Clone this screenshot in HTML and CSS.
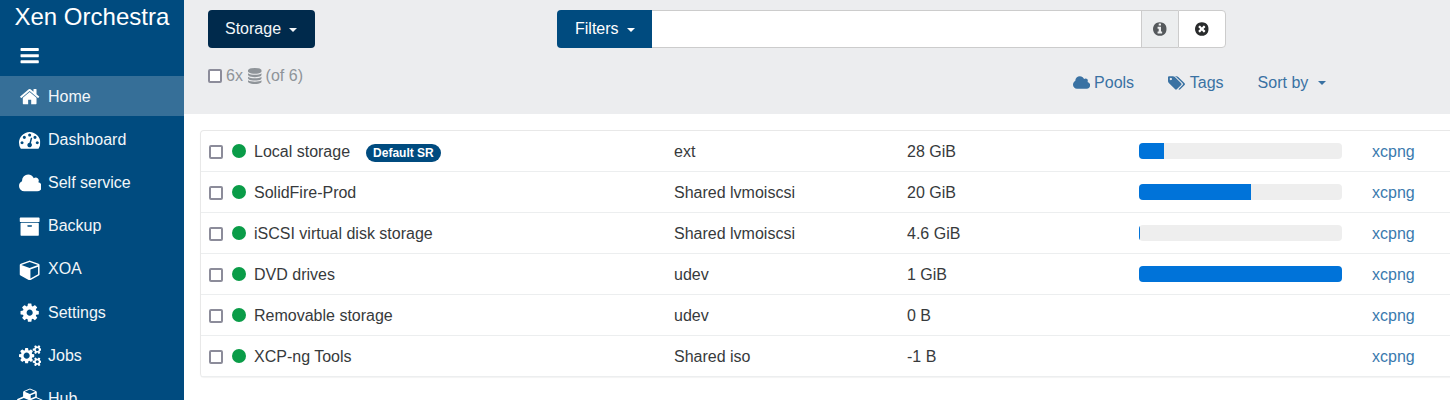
FILE: index.html
```html
<!DOCTYPE html>
<html lang="en">
<head>
    <meta charset="UTF-8">
    <title>Xen Orchestra</title>
    <link rel="stylesheet" href="styles.css">
</head>
<body>
    <svg class="sprite" xmlns="http://www.w3.org/2000/svg">
        <symbol id="i-bars" viewBox="0 0 1536 1792"><path d="M1536 1344v128q0 26-19 45t-45 19H64q-26 0-45-19t-19-45v-128q0-26 19-45t45-19h1408q26 0 45 19t19 45zm0-512v128q0 26-19 45t-45 19H64q-26 0-45-19T0 960V832q0-26 19-45t45-19h1408q26 0 45 19t19 45zm0-512v128q0 26-19 45t-45 19H64q-26 0-45-19T0 448V320q0-26 19-45t45-19h1408q26 0 45 19t19 45z"/></symbol>
        <symbol id="i-home" viewBox="0 0 1792 1792"><path d="M1472 992v480q0 26-19 45t-45 19h-384v-384H768v384H384q-26 0-45-19t-19-45V992q0-1 .5-3t.5-3l575-474 575 474q1 2 1 6zm223-69l-62 74q-8 9-21 11h-3q-13 0-21-7L896 424l-692 577q-12 8-24 7-13-2-21-11l-62-74q-8-10-7-23.500t11-21.500l719-599q32-26 76-26t76 26l244 204V288q0-14 9-23t23-9h192q14 0 23 9t9 23v408l219 182q10 8 11 21.500t-7 23.500z"/></symbol>
        <symbol id="i-dashboard" viewBox="0 0 1792 1792"><path d="M384 1152q0-53-37.500-90.500T256 1024t-90.500 37.500T128 1152t37.500 90.500T256 1280t90.500-37.500T384 1152zm192-448q0-53-37.500-90.500T448 576t-90.500 37.500T320 704t37.500 90.500T448 832t90.500-37.500T576 704zm428 481l101-382q6-26-7.500-48.500T1059 725t-48 6.500-30 39.500l-101 382q-60 5-107 43.500t-63 98.500q-20 77 20 146t117 89 146-20 89-117q16-60-6-117t-72-91zm660-33q0-53-37.500-90.500T1536 1024t-90.500 37.500T1408 1152t37.500 90.500 90.500 37.500 90.500-37.500 37.500-90.500zM1024 512q0-53-37.500-90.500T896 384t-90.500 37.500T768 512t37.500 90.500T896 640t90.500-37.500T1024 512zm448 192q0-53-37.500-90.500T1344 576t-90.500 37.500T1216 704t37.500 90.500T1344 832t90.500-37.500T1472 704zm320 448q0 261-141 483-19 29-54 29H195q-35 0-54-29Q0 1414 0 1152q0-182 71-348t191-286 286-191 348-71 348 71 286 191 191 286 71 348z"/></symbol>
        <symbol id="i-cloud" viewBox="0 0 1920 1792"><path d="M1856 1152q0 159-112.500 271.500T1472 1536H384q-185 0-316.500-131.500T-64 1088q0-132 71-241.500T194 683q-2-28-2-43 0-212 150-362t362-150q158 0 286.500 88T1178 446q70-62 166-62 106 0 181 75t75 181q0 75-41 138 129 30 213 134.500t84 239.500z" transform="translate(64)"/></symbol>
        <symbol id="i-archive" viewBox="0 0 1792 1792"><path d="M1088 832q0-26-19-45t-45-19H768q-26 0-45 19t-19 45 19 45 45 19h256q26 0 45-19t19-45zm576-192v960q0 26-19 45t-45 19H192q-26 0-45-19t-19-45V640q0-26 19-45t45-19h1408q26 0 45 19t19 45zm64-448v256q0 26-19 45t-45 19H128q-26 0-45-19t-19-45V192q0-26 19-45t45-19h1536q26 0 45 19t19 45z"/></symbol>
        <symbol id="i-cube" viewBox="0 0 1792 1792"><path d="M896 1629l640-349V644L896 877v752zm-64-864l698-254-698-254-698 254zm832-252v768q0 35-18 65t-49 47l-704 384q-28 16-61 16t-61-16l-704-384q-31-17-49-47t-18-65V513q0-40 23-73t61-47l704-256q22-8 44-8t44 8l704 256q38 14 61 47t23 73z" transform="translate(64)"/></symbol>
        <symbol id="i-cog" viewBox="0 0 1792 1792"><path d="M1152 896q0-106-75-181t-181-75-181 75-75 181 75 181 181 75 181-75 75-181zm512-109v222q0 12-8 23t-20 13l-185 28q-19 54-39 91 35 50 107 138 10 12 10 25t-9 23q-27 37-99 108t-94 71q-12 0-26-9l-138-108q-44 23-91 38-16 136-29 186-7 28-36 28H785q-14 0-24.500-8.500T749 1634l-28-184q-49-16-90-37l-141 107q-10 9-25 9-14 0-25-11-126-114-165-168-7-10-7-23 0-12 8-23 15-21 51-66.500t54-70.500q-27-50-41-99l-183-27q-13-2-21-12.500t-8-23.500V783q0-12 8-23t19-13l186-28q14-46 39-92-40-57-107-138-10-12-10-24 0-10 9-23 26-36 98.500-107.500T465 263q13 0 26 10l138 107q44-23 91-38 16-136 29-186 7-28 36-28h222q14 0 24.500 8.500T1043 158l28 184q49 16 90 37l142-107q9-9 24-9 13 0 25 10 129 119 165 170 7 8 7 22 0 12-8 23-15 21-51 66.500t-54 70.500q26 50 41 98l183 28q13 2 21 12.500t8 23.500z"/></symbol>
        <symbol id="i-cogs" viewBox="0 0 1920 1792"><path d="M896 896q0-106-75-181t-181-75-181 75-75 181 75 181 181 75 181-75 75-181zm768 512q0-52-38-90t-90-38-90 38-38 90q0 53 37.500 90.500t90.500 37.500 90.500-37.500 37.500-90.500zm0-1024q0-52-38-90t-90-38-90 38-38 90q0 53 37.500 90.500T1536 512t90.500-37.500T1664 384zm-384 421v185q0 10-7 19.500t-16 10.500l-155 24q-11 35-32 76 34 48 90 115 7 11 7 20 0 12-7 19-23 30-82.500 89.500T999 1423q-11 0-21-7l-115-90q-37 19-77 31-11 108-23 155-7 24-30 24H547q-11 0-20-7.500t-10-17.500l-23-153q-34-10-75-31l-118 89q-7 7-20 7-11 0-21-8-144-133-144-160 0-9 7-19 10-14 41-53t47-61q-23-44-35-82l-152-24q-10-1-17-9.500T0 987V802q0-10 7-19.500T23 772l155-24q11-35 32-76-34-48-90-115-7-11-7-20 0-12 7-20 22-30 82-89t79-59q11 0 21 7l115 90q34-18 77-32 11-108 23-154 7-24 30-24h186q11 0 20 7.500t10 17.500l23 153q34 10 75 31l118-89q8-7 20-7 11 0 21 8 144 133 144 160 0 8-7 19-12 16-42 54t-45 60q23 48 34 82l152 23q10 2 17 10.500t7 19.500zm640 533v140q0 16-149 31-12 27-30 52 51 113 51 138 0 4-4 7-122 71-124 71-8 0-46-47t-52-68q-20 2-30 2t-30-2q-14 21-52 68t-46 47q-2 0-124-71-4-3-4-7 0-25 51-138-18-25-30-52-149-15-149-31v-140q0-16 149-31 13-29 30-52-51-113-51-138 0-4 4-7 4-2 35-20t59-34 30-16q8 0 46 46.500t52 67.500q20-2 30-2t30 2q51-71 92-112l6-2q4 0 124 70 4 3 4 7 0 25-51 138 17 23 30 52 149 15 149 31zm0-1024v140q0 16-149 31-12 27-30 52 51 113 51 138 0 4-4 7-122 71-124 71-8 0-46-47t-52-68q-20 2-30 2t-30-2q-14 21-52 68t-46 47q-2 0-124-71-4-3-4-7 0-25 51-138-18-25-30-52-149-15-149-31V314q0-16 149-31 13-29 30-52-51-113-51-138 0-4 4-7 4-2 35-20t59-34 30-16q8 0 46 46.500t52 67.500q20-2 30-2t30 2q51-71 92-112l6-2q4 0 124 70 4 3 4 7 0 25-51 138 17 23 30 52 149 15 149 31z"/></symbol>
        <symbol id="i-cubes" viewBox="0 0 2176 1792"><path d="M640 1632l384-192v-314l-384 164v342zm-64-454l404-173-404-173-404 173zm1088 454l384-192v-314l-384 164v342zm-64-454l404-173-404-173-404 173zm-448-293l384-165V455L1152 619v266zm-64-379l441-189-441-189-441 189zm1088 518v416q0 36-19 67t-52 47l-448 224q-25 14-57 14t-57-14l-448-224q-4-2-7-4-2 2-7 4l-448 224q-25 14-57 14t-57-14l-448-224q-33-16-52-47t-19-67v-416q0-38 21.500-70t56.500-48l434-186V371q0-38 21.500-70t56.500-48l448-192q23-10 50-10t50 10l448 192q35 16 56.500 48t21.500 70v400l434 186q36 16 57 48t21 70z"/></symbol>
        <symbol id="i-database" viewBox="0 0 1536 1792"><path d="M768 768q237 0 443-43t325-127v170q0 69-103 128t-280 93.500-385 34.500-385-34.500T103 896 0 768V598q119 84 325 127t443 43zm0 768q237 0 443-43t325-127v170q0 69-103 128t-280 93.500-385 34.500-385-34.500-280-93.500-103-128v-170q119 84 325 127t443 43zm0-384q237 0 443-43t325-127v170q0 69-103 128t-280 93.500-385 34.500-385-34.500-280-93.500-103-128V982q119 84 325 127t443 43zM768 0q208 0 385 34.500t280 93.500 103 128v128q0 69-103 128t-280 93.500T768 640t-385-34.500T103 512 0 384V256q0-69 103-128t280-93.500T768 0z"/></symbol>
        <symbol id="i-tags" viewBox="0 0 1984 1792"><path d="M448 448q0-53-37.500-90.500T320 320t-90.500 37.500T192 448t37.500 90.500T320 576t90.500-37.500T448 448zm1067 576q0 53-37 90l-491 492q-39 37-91 37-53 0-90-37L91 890q-38-37-64.500-101T0 672V256q0-52 38-90t90-38h416q53 0 117 26.500T763 219l715 714q37 39 37 91zm384 0q0 53-37 90l-491 492q-39 37-91 37-36 0-59-14t-53-45l470-470q37-37 37-90 0-52-37-91L923 219q-38-38-102-64.500T704 128h224q53 0 117 26.500t102 64.500l715 714q37 39 37 91z"/></symbol>
        <symbol id="i-info" viewBox="0 0 1536 1792"><path d="M1024 1376v-160q0-14-9-23t-23-9h-96V672q0-14-9-23t-23-9H544q-14 0-23 9t-9 23v160q0 14 9 23t23 9h96v320h-96q-14 0-23 9t-9 23v160q0 14 9 23t23 9h448q14 0 23-9t9-23zM896 480V320q0-14-9-23t-23-9H672q-14 0-23 9t-9 23v160q0 14 9 23t23 9h192q14 0 23-9t9-23zm640 416q0 209-103 385.500T1153.500 1561 768 1664t-385.500-103T103 1281.500 0 896t103-385.500T382.500 231 768 128t385.500 103T1433 510.500 1536 896z"/></symbol>
        <symbol id="i-times" viewBox="0 0 1536 1792"><path d="M1149 1122q0-26-19-45L949 896l181-181q19-19 19-45 0-27-19-46l-90-90q-19-19-46-19-26 0-45 19L768 715 587 534q-19-19-45-19-27 0-46 19l-90 90q-19 19-19 46 0 26 19 45l181 181-181 181q-19 19-19 45 0 27 19 46l90 90q19 19 46 19 26 0 45-19l181-181 181 181q19 19 45 19 27 0 46-19l90-90q19-19 19-46zm387-226q0 209-103 385.500T1153.500 1561 768 1664t-385.500-103T103 1281.500 0 896t103-385.500T382.500 231 768 128t385.500 103T1433 510.500 1536 896z"/></symbol>
    </svg>

    <div class="app">
        <nav class="sidebar">
            <div class="brand">Xen Orchestra</div>
            <ul class="menu">
                <li class="menu-item"><span class="menu-icon"><svg class="icon"><use href="#i-bars"/></svg></span></li>
                <li class="menu-item active"><span class="menu-icon"><svg class="icon"><use href="#i-home"/></svg></span>Home</li>
                <li class="menu-item"><span class="menu-icon"><svg class="icon"><use href="#i-dashboard"/></svg></span>Dashboard</li>
                <li class="menu-item"><span class="menu-icon"><svg class="icon wide"><use href="#i-cloud"/></svg></span>Self service</li>
                <li class="menu-item"><span class="menu-icon"><svg class="icon"><use href="#i-archive"/></svg></span>Backup</li>
                <li class="menu-item"><span class="menu-icon"><svg class="icon"><use href="#i-cube"/></svg></span>XOA</li>
                <li class="menu-item"><span class="menu-icon"><svg class="icon"><use href="#i-cog"/></svg></span>Settings</li>
                <li class="menu-item"><span class="menu-icon"><svg class="icon wide"><use href="#i-cogs"/></svg></span>Jobs</li>
                <li class="menu-item"><span class="menu-icon"><svg class="icon wider"><use href="#i-cubes"/></svg></span>Hub</li>
            </ul>
        </nav>

        <main class="content">
            <header class="toolbar">
                <div class="toolbar-top">
                    <button class="btn btn-dark">Storage<span class="caret"></span></button>
                    <div class="filter-group">
                        <button class="btn btn-filter">Filters<span class="caret"></span></button>
                        <input class="filter-input" type="text">
                        <span class="addon addon-info"><svg class="glyph"><use href="#i-info"/></svg></span>
                        <span class="addon addon-clear"><svg class="glyph"><use href="#i-times"/></svg></span>
                    </div>
                </div>
                <div class="toolbar-bottom">
                    <div class="selection">
                        <input class="check" type="checkbox">
                        <span>6x</span>
                        <svg class="glyph db-icon"><use href="#i-database"/></svg>
                        <span>(of 6)</span>
                    </div>
                    <div class="sorters">
                        <a class="sorter sorter-pools"><svg class="glyph pools-icon"><use href="#i-cloud"/></svg>Pools</a>
                        <a class="sorter sorter-tags"><svg class="glyph tags-icon"><use href="#i-tags"/></svg>Tags</a>
                        <a class="sorter">Sort by<span class="caret"></span></a>
                    </div>
                </div>
            </header>

            <section class="sr-list">
                <div class="sr-row">
                    <div class="sr-name"><input class="check" type="checkbox"><span class="dot"></span>Local storage<span class="badge">Default SR</span></div>
                    <div>ext</div>
                    <div>28 GiB</div>
                    <div class="bar"><div class="bar-fill" style="width: 25px"></div></div>
                    <a class="sr-host">xcpng</a>
                </div>
                <div class="sr-row">
                    <div class="sr-name"><input class="check" type="checkbox"><span class="dot"></span>SolidFire-Prod</div>
                    <div>Shared lvmoiscsi</div>
                    <div>20 GiB</div>
                    <div class="bar"><div class="bar-fill" style="width: 112px"></div></div>
                    <a class="sr-host">xcpng</a>
                </div>
                <div class="sr-row">
                    <div class="sr-name"><input class="check" type="checkbox"><span class="dot"></span>iSCSI virtual disk storage</div>
                    <div>Shared lvmoiscsi</div>
                    <div>4.6 GiB</div>
                    <div class="bar"><div class="bar-fill" style="width: 1px"></div></div>
                    <a class="sr-host">xcpng</a>
                </div>
                <div class="sr-row">
                    <div class="sr-name"><input class="check" type="checkbox"><span class="dot"></span>DVD drives</div>
                    <div>udev</div>
                    <div>1 GiB</div>
                    <div class="bar"><div class="bar-fill" style="width: 203px"></div></div>
                    <a class="sr-host">xcpng</a>
                </div>
                <div class="sr-row">
                    <div class="sr-name"><input class="check" type="checkbox"><span class="dot"></span>Removable storage</div>
                    <div>udev</div>
                    <div>0 B</div>
                    <div></div>
                    <a class="sr-host">xcpng</a>
                </div>
                <div class="sr-row">
                    <div class="sr-name"><input class="check" type="checkbox"><span class="dot"></span>XCP-ng Tools</div>
                    <div>Shared iso</div>
                    <div>-1 B</div>
                    <div></div>
                    <a class="sr-host">xcpng</a>
                </div>
            </section>
        </main>
    </div>
</body>
</html>
```

FILE: styles.css
```css
* {
    box-sizing: border-box;
}
html, body {
    height: 100%;
}
body {
    margin: 0;
    overflow: hidden;
    font-family: "Liberation Sans", Arial, sans-serif;
    font-size: 16px;
    line-height: 24px;
    color: #373a3c;
    background-color: #fff;
}
.sprite {
    display: none;
}
.app {
    display: flex;
    height: 400px;
    overflow: hidden;
}

/* sidebar */
.sidebar {
    flex: 0 0 184px;
    background-color: #004b7f;
    color: #fff;
    overflow: hidden;
}
.brand {
    height: 36px;
    padding-left: 14.5px;
    font-size: 24px;
    line-height: 33px;
}
.menu {
    display: flex;
    flex-direction: column;
    margin: 0;
    padding: 0;
    list-style: none;
}
.menu-item {
    display: flex;
    flex: none;
    align-items: center;
    height: 40px;
    padding-top: 2px;
    margin-bottom: 3.11px;
    color: #f2f6f9;
}
.menu-item:first-child {
    margin-bottom: 0;
    padding-top: 0;
}
.menu-item.active {
    background-color: #366f98;
}
.menu-icon {
    display: flex;
    justify-content: center;
    width: 22px;
    margin-left: 19px;
    margin-right: 7px;
    color: #fff;
}
.icon {
    flex: none;
    width: 21.33px;
    height: 21.33px;
    fill: currentColor;
}
.icon.wide {
    width: 22.86px;
}
.icon.wider {
    width: 25.9px;
}

/* toolbar */
.content {
    flex: 1;
    min-width: 0;
}
.toolbar {
    height: 114px;
    padding: 10px 0 0 24px;
    background-color: #ecedef;
}
.toolbar-top {
    display: flex;
}
.btn {
    height: 38px;
    padding: 0 0 0 17px;
    border: 0;
    border-radius: 4px;
    font: inherit;
    text-align: left;
    white-space: nowrap;
    color: #fff;
}
.btn-dark {
    width: 107px;
    margin-right: 242px;
    background-color: #002a4c;
    color: #f2f6f9;
}
.caret {
    display: inline-block;
    margin-left: 8px;
    vertical-align: middle;
    border-top: 4.8px solid currentColor;
    border-left: 4.8px solid transparent;
    border-right: 4.8px solid transparent;
}
.filter-group {
    display: flex;
    width: 669px;
    height: 38px;
}
.btn-filter {
    width: 95px;
    padding-left: 18px;
    background-color: #004b7f;
    border-radius: 4px 0 0 4px;
}
.filter-input {
    flex: 1;
    min-width: 0;
    border: 1px solid #ccc;
    border-left: 0;
    border-right: 0;
    background-color: #fff;
}
.addon {
    display: flex;
    align-items: center;
    justify-content: center;
    border: 1px solid #ccc;
}
.addon-info {
    width: 37px;
    background-color: #eceeef;
    color: #55595c;
    border-right: 0;
}
.addon-clear {
    width: 48px;
    background-color: #fff;
    color: #292b2c;
    border-radius: 0 4px 4px 0;
}
.glyph {
    flex: none;
    width: 13.71px;
    height: 16px;
    fill: currentColor;
}
.toolbar-bottom {
    display: flex;
    align-items: flex-start;
}
.selection {
    display: flex;
    align-items: center;
    gap: 4px;
    margin-top: 16px;
    color: #8f9499;
}
.db-icon {
    margin-left: 1px;
}
.sorters {
    display: flex;
    margin-top: 23px;
    margin-left: 770px;
    color: #3a72a3;
}
.sorter {
    display: flex;
    align-items: center;
}
.sorter .caret {
    margin-left: 10px;
}
.sorter-pools {
    margin-right: 34px;
}
.sorter-tags {
    margin-right: 34px;
}
.pools-icon {
    width: 17.14px;
    margin-right: 4px;
}
.tags-icon {
    width: 17.71px;
    margin-right: 4px;
}

/* checkbox */
.check {
    appearance: none;
    flex: none;
    width: 14px;
    height: 14px;
    margin: 0;
    border: 2px solid #8c8c9a;
    border-radius: 2px;
    background-color: #fff;
}

/* storage list */
.sr-list {
    width: 1300px;
    margin: 16px 0 0 16px;
    border: 1px solid #e8e8e8;
    border-bottom: 0;
    border-radius: 4px;
    box-shadow: 0 1px 1px rgba(0, 0, 0, .05);
}
.sr-row {
    display: grid;
    grid-template-columns: 465px 233px 232px 203px auto;
    column-gap: 0;
    align-items: center;
    height: 41px;
    padding-top: 2px;
    padding-left: 8px;
    border-bottom: 1px solid #eceeef;
}
.sr-name {
    display: flex;
    align-items: center;
}
.dot {
    flex: none;
    width: 14px;
    height: 14px;
    margin: -2px 8px 0 9px;
    border-radius: 50%;
    background-color: #0a9c48;
}
.badge {
    margin-top: 2px;
    margin-left: 16px;
    padding: 0 7px;
    border-radius: 10px;
    background-color: #004b7f;
    color: #fff;
    font-size: 12px;
    font-weight: bold;
    line-height: 18px;
}
.bar {
    height: 16px;
    margin-top: -2px;
    border-radius: 4px;
    background-color: #eee;
    overflow: hidden;
}
.bar-fill {
    height: 100%;
    background-color: #0073d9;
}
.sr-host {
    margin-left: 30px;
    color: #3a7aae;
}
```
